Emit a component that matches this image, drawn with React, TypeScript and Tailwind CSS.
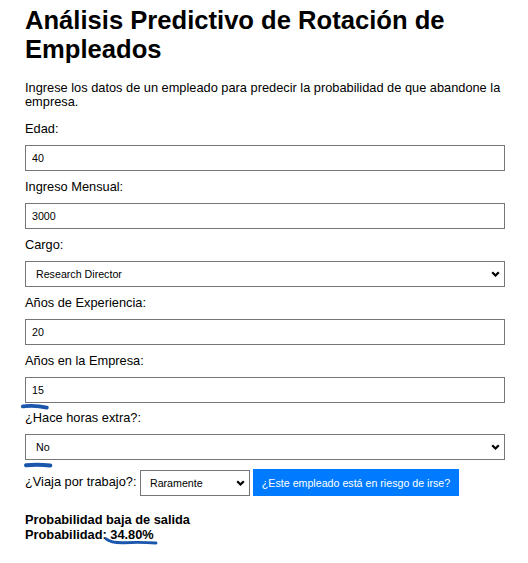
import type { ReactNode } from "react";

function Chevron() {
  return (
    <svg
      className="pointer-events-none absolute right-[5px] top-1/2 -translate-y-1/2"
      width="9"
      height="6"
      viewBox="0 0 9 6"
    >
      <path d="M1.2 1.2 L4.5 4.5 L7.8 1.2" fill="none" stroke="#000" strokeWidth="2.2" />
    </svg>
  );
}

function Field({ label, children }: { label: string; children: ReactNode }) {
  return (
    <div>
      <label className="block leading-[14.7px] mb-[8.3px]">{label}</label>
      <div className="mb-[8.86px]">{children}</div>
    </div>
  );
}

function TextInput({ value }: { value: string }) {
  return (
    <input
      type="text"
      defaultValue={value}
      className="block w-full h-[26px] border border-[#767676] bg-white pl-[6px] text-[10.67px] text-black outline-none"
    />
  );
}

function SelectBox({ value, options }: { value: string; options: string[] }) {
  return (
    <div className="relative">
      <select
        defaultValue={value}
        className="block w-full h-[26px] appearance-none border border-[#767676] bg-white pl-[10px] text-[10.67px] text-black outline-none"
      >
        {options.map((o) => (
          <option key={o}>{o}</option>
        ))}
      </select>
      <Chevron />
    </div>
  );
}

// hand-drawn blue marks that sit over the form
function Marks() {
  return (
    <svg className="pointer-events-none absolute left-0 top-0" width="528" height="563">
      <g fill="none" stroke="#1b56ad" strokeLinecap="round">
        <path d="M22.8 406.4 Q35 404.9 46.8 407.6" strokeWidth="3.8" />
        <path d="M26 465.3 Q38 464 50.3 465.6" strokeWidth="4" />
        <path d="M106 538.8 Q111 543 124 542.7 Q140 541.9 156 543" strokeWidth="2.9" />
      </g>
    </svg>
  );
}

export default function App() {
  return (
    <div className="relative min-h-[563px] bg-white text-black font-['Liberation_Sans',Arial,sans-serif]">
      <div className="w-[480px] ml-[25px] pt-[6px]">
        <h1 className="text-[25.6px] font-bold leading-[29.4px]">
          Análisis Predictivo de Rotación de Empleados
        </h1>
        <p className="mt-[15.7px] text-[12.8px] leading-[14.7px]">
          Ingrese los datos de un empleado para predecir la probabilidad de que abandone la empresa.
        </p>

        <form className="mt-[12.2px] text-[12.8px]">
          <Field label="Edad:">
            <TextInput value="40" />
          </Field>
          <Field label="Ingreso Mensual:">
            <TextInput value="3000" />
          </Field>
          <Field label="Cargo:">
            <SelectBox
              value="Research Director"
              options={[
                "Sales Executive",
                "Research Scientist",
                "Laboratory Technician",
                "Manufacturing Director",
                "Healthcare Representative",
                "Manager",
                "Sales Representative",
                "Research Director",
                "Human Resources",
              ]}
            />
          </Field>
          <Field label="Años de Experiencia:">
            <TextInput value="20" />
          </Field>
          <Field label="Años en la Empresa:">
            <TextInput value="15" />
          </Field>
          <Field label="¿Hace horas extra?:">
            <SelectBox value="No" options={["No", "Sí"]} />
          </Field>

          <div className="flex items-center h-[27px]">
            <label className="leading-[14.7px]">¿Viaja por trabajo?:</label>
            <div className="relative ml-[3.5px] w-[110px]">
              <select
                defaultValue="Raramente"
                className="block w-full h-[26.4px] appearance-none border border-[#767676] bg-white pl-[9px] text-[10.67px] text-black outline-none"
              >
                <option>No viaja</option>
                <option>Raramente</option>
                <option>Frecuentemente</option>
              </select>
              <Chevron />
            </div>
            <button
              type="button"
              className="ml-[3.3px] h-[27.4px] bg-[#007bff] px-[8.6px] text-[10.67px] text-white"
            >
              ¿Este empleado está en riesgo de irse?
            </button>
          </div>
        </form>

        <div className="mt-[17px] text-[12.8px] leading-[14.7px] font-bold">
          Probabilidad baja de salida
          <br />
          Probabilidad: 34.80%
        </div>
      </div>
      <Marks />
    </div>
  );
}
